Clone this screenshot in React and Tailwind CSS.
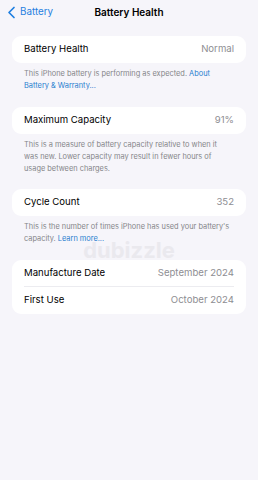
import React from 'react'

function Row({ label, value, border }) {
  return (
    <div className={`flex items-center justify-between h-[27px] mx-[12px] ${border ? 'border-b border-[#ececf0]' : ''}`}>
      <span className="text-[9.6px] text-black">{label}</span>
      <span className="text-[9.6px] text-[#8e8e93]">{value}</span>
    </div>
  )
}

function Card({ children }) {
  return <div className="mx-[12px] bg-white rounded-[9px]">{children}</div>
}

function Footer({ children }) {
  return (
    <p className="ml-[24px] w-[210px] pt-[5px] text-[7.4px] leading-[12px] text-[#858589]">{children}</p>
  )
}

export default function App() {
  return (
    <div className="relative w-[258px] h-[480px] bg-[#f6f5fa] overflow-hidden" style={{ fontFamily: 'Inter, "Liberation Sans", sans-serif' }}>
      <header className="relative flex items-center h-[25px]">
        <div className="flex items-center pl-[7px] text-[#1f7fe0]">
          <svg width="9" height="13" viewBox="0 0 9 13" fill="none">
            <path d="M7 1.5 L2 6.5 L7 11.5" stroke="#1f7fe0" strokeWidth="1.7" strokeLinecap="round" strokeLinejoin="round" />
          </svg>
          <span className="ml-[4px] text-[9.8px]">Battery</span>
        </div>
        <div className="absolute inset-0 flex items-center justify-center text-[10px] font-semibold text-black">Battery Health</div>
      </header>

      <div className="pt-[11px]">
        <Card>
          <Row label="Battery Health" value="Normal" />
        </Card>
        <Footer>
          This iPhone battery is performing as expected. <span className="text-[#2a7fcf]">About<br />Battery &amp; Warranty...</span>
        </Footer>

        <div className="h-[15px]" />
        <Card>
          <Row label="Maximum Capacity" value="91%" />
        </Card>
        <Footer>
          This is a measure of battery capacity relative to when it<br />was new. Lower capacity may result in fewer hours of<br />usage between charges.
        </Footer>

        <div className="h-[14px]" />
        <Card>
          <Row label="Cycle Count" value="352" />
        </Card>
        <Footer>
          This is the number of times iPhone has used your battery's<br />capacity. <span className="text-[#2a7fcf]">Learn more...</span>
        </Footer>

        <div className="h-[15px]" />
        <Card>
          <Row label="Manufacture Date" value="September 2024" border />
          <Row label="First Use" value="October 2024" />
        </Card>
      </div>

      <div className="absolute left-0 right-0 top-[234px] text-center text-[22px] font-bold text-[#e6e4ea] opacity-70 pointer-events-none">dubizzle</div>
    </div>
  )
}
